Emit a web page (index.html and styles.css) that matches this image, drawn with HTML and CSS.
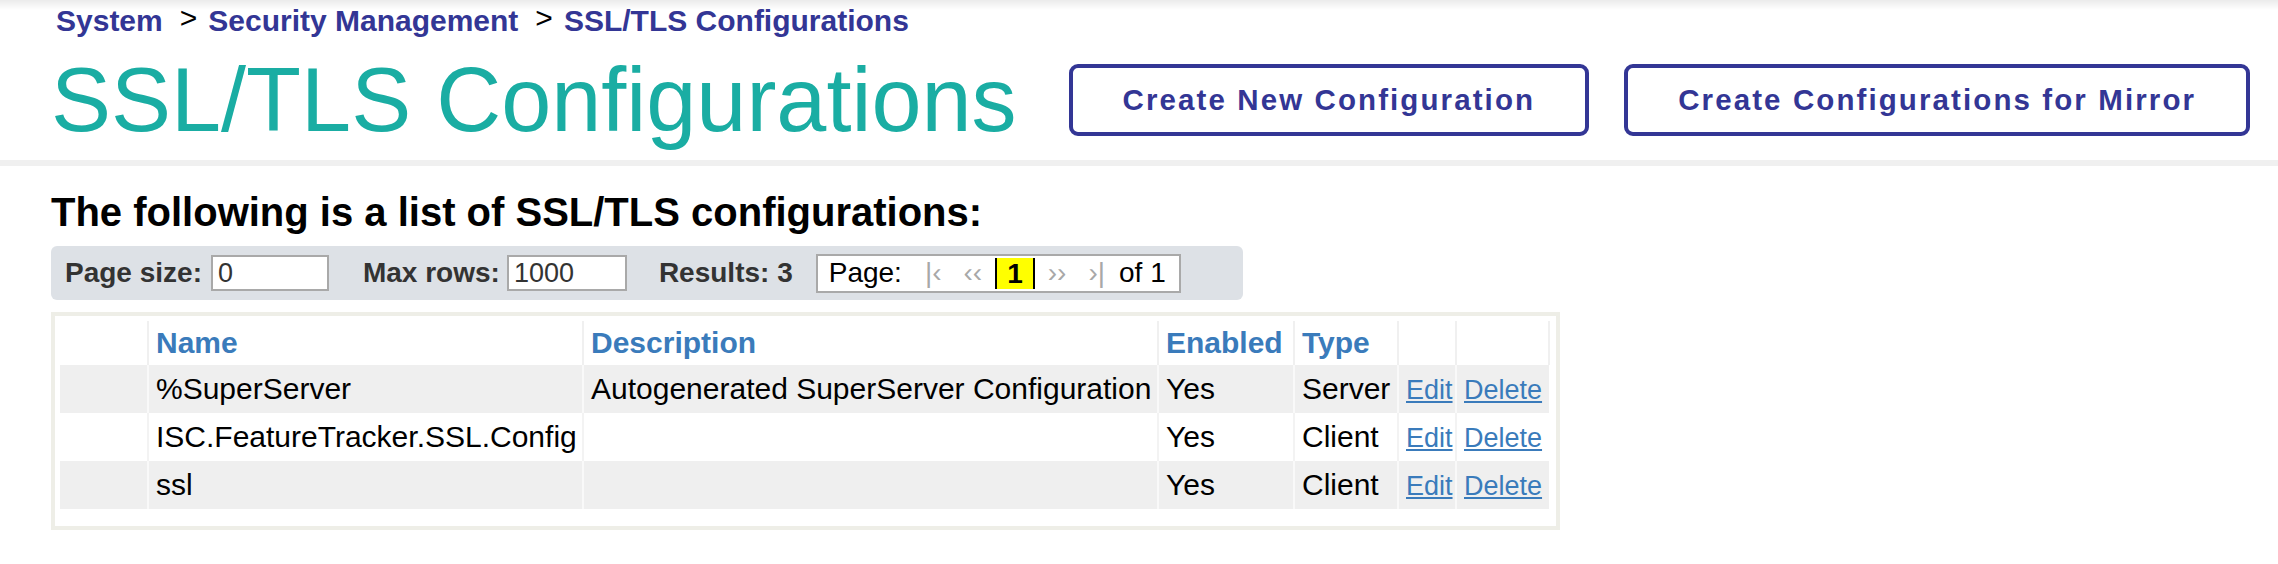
FILE: index.html
```html
<!DOCTYPE html>
<html lang="en">
<head>
<meta charset="utf-8">
<title>SSL/TLS Configurations</title>
<link rel="stylesheet" href="styles.css">
</head>
<body>
<div class="top">
  <nav class="crumbs">
    <a href="#">System</a><span class="sep">&gt;</span><a href="#">Security Management</a><span class="sep">&gt;</span><a href="#">SSL/TLS Configurations</a>
  </nav>
  <header class="titlebar">
    <h1 class="title">SSL/TLS Configurations</h1>
    <div class="actions">
      <button class="btn">Create New Configuration</button>
      <button class="btn">Create Configurations for Mirror</button>
    </div>
  </header>
</div>
<div class="rule"></div>
<main class="content">
  <h2 class="heading">The following is a list of SSL/TLS configurations:</h2>
  <div class="toolbar">
    <label class="lbl">Page size:</label><input class="num num-size" type="text" value="0">
    <label class="lbl lbl-gap">Max rows:</label><input class="num num-rows" type="text" value="1000">
    <span class="lbl results">Results: 3</span>
    <div class="pager">
      <span class="pg-text">Page:</span>
      <span class="pg-nav pg-first">|&lsaquo;</span>
      <span class="pg-nav pg-prev">&lsaquo;&lsaquo;</span>
      <span class="pg-cur">1</span>
      <span class="pg-nav pg-next">&rsaquo;&rsaquo;</span>
      <span class="pg-nav pg-last">&rsaquo;|</span>
      <span class="pg-text pg-of">of 1</span>
    </div>
  </div>
  <div class="tablewrap">
    <table class="grid">
      <colgroup>
        <col class="c-sel"><col class="c-name"><col class="c-desc"><col class="c-en"><col class="c-type"><col class="c-edit"><col class="c-del">
      </colgroup>
      <thead>
        <tr><th class="first"></th><th>Name</th><th>Description</th><th>Enabled</th><th>Type</th><th></th><th class="last"></th></tr>
      </thead>
      <tbody>
        <tr class="odd"><td class="first"></td><td>%SuperServer</td><td>Autogenerated SuperServer Configuration</td><td>Yes</td><td>Server</td><td><a class="lnk" href="#">Edit</a></td><td><a class="lnk" href="#">Delete</a></td></tr>
        <tr class="even"><td class="first"></td><td>ISC.FeatureTracker.SSL.Config</td><td></td><td>Yes</td><td>Client</td><td><a class="lnk" href="#">Edit</a></td><td><a class="lnk" href="#">Delete</a></td></tr>
        <tr class="odd"><td class="first"></td><td>ssl</td><td></td><td>Yes</td><td>Client</td><td><a class="lnk" href="#">Edit</a></td><td><a class="lnk" href="#">Delete</a></td></tr>
      </tbody>
    </table>
  </div>
</main>
</body>
</html>
```

FILE: styles.css
```css
html, body {
  margin: 0;
  padding: 0;
}
body {
  font-family: "Liberation Sans", Arial, sans-serif;
  background: #fff linear-gradient(#ebebeb, #ffffff 10px) no-repeat;
  color: #000;
}

.top {
  padding: 4px 0 0 51px;
}

.crumbs {
  padding-left: 5px;
  font-size: 30px;
  line-height: 34px;
  white-space: nowrap;
}
.crumbs a {
  color: #333695;
  font-weight: bold;
  text-decoration: none;
}
.crumbs .sep {
  color: #000;
  font-size: 30px;
  margin: 0 11px 0 17px;
  position: relative;
  top: -3px;
}

.titlebar {
  display: flex;
  align-items: center;
  margin-top: 10px;
}
.title {
  margin: 0;
  font-size: 90px;
  font-weight: normal;
  line-height: 104px;
  color: #1aada3;
  white-space: nowrap;
}
.actions {
  display: flex;
  gap: 35px;
  margin-left: 52px;
}
.btn {
  height: 72px;
  padding: 0 50px;
  background: #fff;
  border: 4px solid #333695;
  border-radius: 9px;
  color: #333695;
  font-family: "Liberation Sans", Arial, sans-serif;
  font-weight: bold;
  font-size: 29.5px;
  letter-spacing: 2.1px;
  white-space: nowrap;
}

.rule {
  margin-top: 8px;
  height: 6px;
  background: #f0f0f0;
}

.content {
  padding-left: 51px;
}
.heading {
  margin: 23px 0 0 0;
  font-size: 40px;
  line-height: 46px;
  font-weight: bold;
}

.toolbar {
  display: inline-flex;
  align-items: center;
  margin-top: 11px;
  height: 54px;
  padding: 0 62px 0 14px;
  background: #dde1e6;
  border-radius: 6px;
  vertical-align: top;
}
.lbl {
  font-size: 28px;
  font-weight: bold;
  color: #333;
  white-space: nowrap;
}
.lbl-gap {
  margin-left: 34px;
}
.num {
  box-sizing: border-box;
  height: 36px;
  margin-left: 9px;
  padding: 0 5px;
  border: 2px solid #a9a9a9;
  background: #fff;
  font-family: "Liberation Sans", Arial, sans-serif;
  font-size: 27px;
  color: #333;
  outline: none;
}
.num-size { width: 118px; }
.num-rows { width: 120px; margin-left: 7px; }
.results {
  margin-left: 32px;
}

.pager {
  box-sizing: border-box;
  display: flex;
  align-items: center;
  height: 39px;
  margin-left: 23px;
  padding: 0 13px 0 11px;
  background: #fff;
  border: 2px solid #a9a9a9;
  font-size: 28px;
  white-space: nowrap;
}
.pg-text { color: #000; }
.pg-nav { color: #a8a8a8; }
.pg-first { margin-left: 23px; }
.pg-prev { margin-left: 22px; }
.pg-cur {
  margin-left: 13px;
  height: 31px;
  line-height: 31px;
  padding: 0 10px;
  background: #ffff00;
  border-left: 2px solid #000;
  border-right: 2px solid #000;
  font-weight: bold;
}
.pg-next { margin-left: 13px; }
.pg-last { margin-left: 22px; }
.pg-of { margin-left: 14px; }

.tablewrap {
  box-sizing: border-box;
  width: 1509px;
  margin-top: 12px;
  padding: 5px 7px 17px 5px;
  border: 4px solid #eeeee7;
  background: #fff;
}
.grid {
  table-layout: fixed;
  width: 1489px;
  border-collapse: collapse;
  font-size: 30px;
}
.c-sel { width: 88px; }
.c-name { width: 435px; }
.c-desc { width: 575px; }
.c-en { width: 136px; }
.c-type { width: 104px; }
.c-edit { width: 58px; }
.c-del { width: 93px; }

.grid th, .grid td {
  padding: 0 0 0 7px;
  text-align: left;
  white-space: nowrap;
  overflow: hidden;
  vertical-align: middle;
}
.grid thead tr { height: 44px; }
.grid th {
  color: #3a7bbb;
  font-weight: bold;
  border-left: 2px solid #f0f0f0;
}
.grid th.first { border-left: none; }
.grid th.last { border-right: 2px solid #f0f0f0; }
.grid tbody tr { height: 48px; }
.grid td { border-left: 2px solid #f9f9f9; }
.grid td.first { border-left: none; }
.grid tr.odd td { background: #efefef; }
.grid tr.even td { background: #fff; }
.grid tr.even td { border-left-color: #f3f3f3; }

.lnk {
  color: #3a7bbb;
  font-size: 27px;
  text-decoration: underline;
}
```
